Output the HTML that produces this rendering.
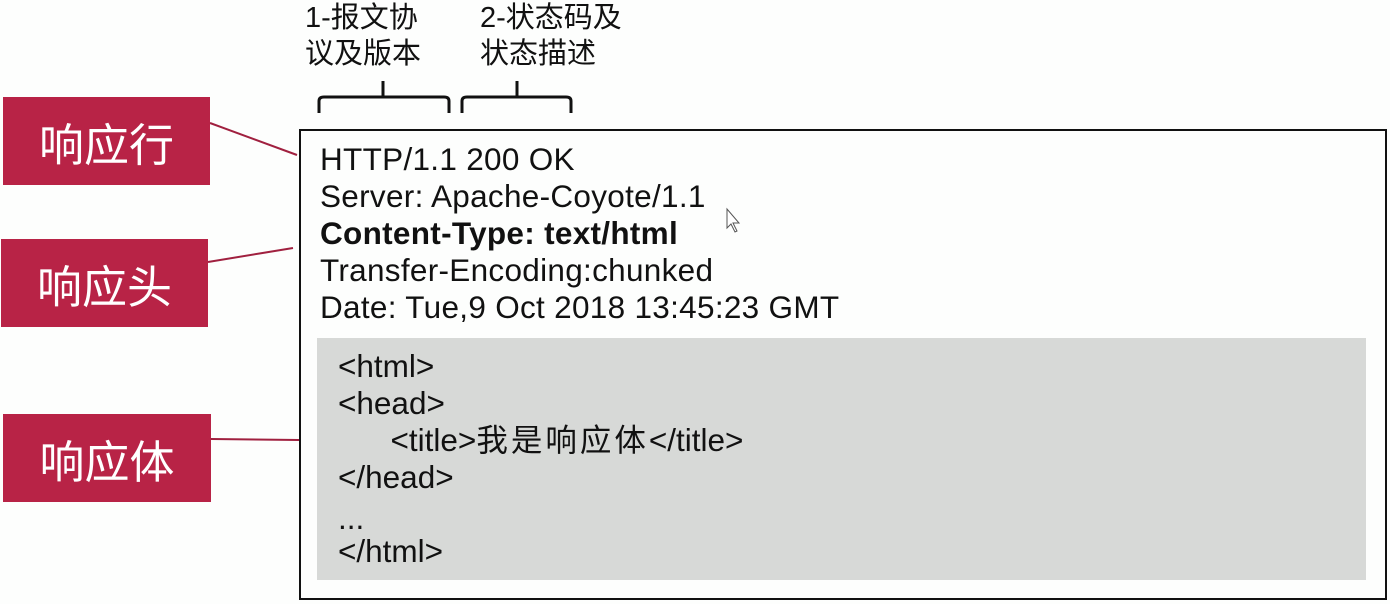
<!DOCTYPE html>
<html><head><meta charset="utf-8"><style>
body{margin:0;width:1390px;height:604px;background:#fdfefd;position:relative;overflow:hidden;font-family:"Liberation Sans","Noto Sans CJK SC",sans-serif;color:#111}
.red{position:absolute;background:#b82346;color:#fff;font-size:45px;display:flex;align-items:center;justify-content:center;width:207px;height:88px}
.t{position:absolute;font-size:31.5px;line-height:37px;white-space:nowrap}
.box{position:absolute;left:299px;top:129px;width:1084px;height:467px;border:2px solid #111}
.gray{position:absolute;left:317px;top:338px;width:1049px;height:242px;background:#d7d9d7}
</style></head><body>
<div class="t" style="left:305px;top:0px;font-size:29px;line-height:36px">1-报文协<br>议及版本</div>
<div class="t" style="left:480px;top:0px;font-size:29px;line-height:36px">2-状态码及<br>状态描述</div>
<svg style="position:absolute;left:0;top:0" width="1390" height="604">
<g fill="none" stroke="#111" stroke-width="3">
<path d="M319 113 V101 Q319 97 324 97 H444 Q449 97 449 101 V113 M383 97 V81"/>
<path d="M462 113 V101 Q462 97 467 97 H566 Q571 97 571 101 V113 M517 97 V81"/>
</g>
<g stroke="#a0203f" stroke-width="2">
<line x1="210" y1="123" x2="297" y2="155"/>
<line x1="208" y1="262" x2="293" y2="248"/>
<line x1="211" y1="439" x2="299" y2="440"/>
</g>
<path d="M727 209 L727 228 L731 224 L735 232 L737 231 L733 223 L739 223 Z" fill="#fff" stroke="#555" stroke-width="1"/>
</svg>
<div class="red" style="left:3px;top:97px">响应行</div>
<div class="red" style="left:1px;top:239px">响应头</div>
<div class="red" style="left:3px;top:414px;width:208px">响应体</div>
<div class="box"></div>
<div class="gray"></div>
<div class="t" style="left:320px;top:141px;letter-spacing:0.3px">HTTP/1.1 200 OK<br>Server: Apache-Coyote/1.1<br><b>Content-Type: text/html</b><br>Transfer-Encoding:chunked<br>Date: Tue,9 Oct 2018 13:45:23 GMT</div>
<div class="t" style="left:338px;top:348px">&lt;html&gt;<br>&lt;head&gt;<br>&nbsp;&nbsp;&nbsp;&nbsp;&nbsp;&nbsp;&lt;title&gt;<span style="letter-spacing:3px">我是响应体</span>&lt;/title&gt;<br>&lt;/head&gt;<br><span style="position:relative;top:4px">...</span><br>&lt;/html&gt;</div>
</body></html>
